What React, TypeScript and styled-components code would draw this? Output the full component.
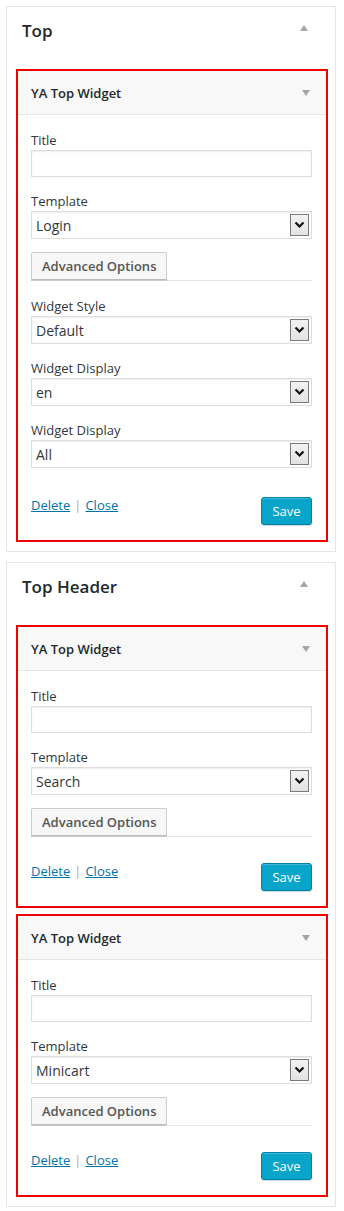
import React from "react";
import styled, { createGlobalStyle } from "styled-components";

const GlobalStyle = createGlobalStyle`
  body {
    margin: 0;
    background: #fff;
    font-family: "Open Sans", "Liberation Sans", sans-serif;
    color: #23282d;
  }
`;

const Page = styled.div`
  padding: 6px 8px 8px 6px;
  display: flex;
  flex-direction: column;
  gap: 10px;
`;

const Panel = styled.section`
  width: 330px;
  border: 1px solid #e5e5e5;
  padding: 0 7px 9px 9px;
  box-sizing: border-box;
`;

const PanelHeader = styled.div`
  height: 62px;
  box-sizing: border-box;
  display: flex;
  align-items: flex-start;
  justify-content: space-between;
  padding: 12px 20px 0 6px;
`;

const PanelTitle = styled.h2`
  margin: 0;
  font-size: 17px;
  line-height: 24px;
  font-weight: 600;
  color: #23282d;
`;

const Arrow = styled.span<{ $down?: boolean }>`
  width: 0;
  height: 0;
  border-left: 4px solid transparent;
  border-right: 4px solid transparent;
  ${(p) =>
    p.$down
      ? "border-top: 6px solid #a0a5aa;"
      : "border-bottom: 6px solid #a0a5aa; margin-top: 6px;"}
`;

const WidgetList = styled.div`
  display: flex;
  flex-direction: column;
  gap: 6px;
`;

const Widget = styled.div`
  border: 2px solid #f00000;
`;

const WidgetHeader = styled.div`
  height: 43px;
  background: #f8f8f8;
  border-bottom: 1px solid #e5e5e5;
  display: flex;
  align-items: center;
  justify-content: space-between;
  padding: 0 16px 0 13px;
`;

const WidgetTitle = styled.h3`
  margin: 0;
  font-size: 13px;
  font-weight: 600;
  color: #23282d;
`;

const WidgetBody = styled.div`
  padding: 16px 14px 15px 13px;
`;

const Field = styled.div`
  & + & {
    margin-top: 15px;
  }
`;

const Label = styled.label`
  display: block;
  font-size: 13px;
  line-height: 18px;
  color: #32373c;
  margin-bottom: 1px;
`;

const TextInput = styled.div`
  height: 27px;
  border: 1px solid #ddd;
  box-shadow: inset 0 1px 2px rgba(0, 0, 0, 0.07);
  box-sizing: border-box;
`;

const Select = styled.div`
  height: 28px;
  border: 1px solid #ddd;
  box-shadow: inset 0 1px 2px rgba(0, 0, 0, 0.07);
  box-sizing: border-box;
  display: flex;
  align-items: center;
  justify-content: space-between;
  padding: 0 2px 0 4px;
  font-size: 14px;
  color: #32373c;
`;

const DropButton = styled.span`
  width: 19px;
  height: 22px;
  box-sizing: border-box;
  border: 1px solid #7a7a7a;
  background: linear-gradient(#f2f2f2, #e3e3e3);
  display: flex;
  align-items: center;
  justify-content: center;
`;

const AdvancedRow = styled.div`
  margin-top: 13px;
  border-bottom: 1px solid #e5e5e5;
  & + ${Field} {
    margin-top: 16px;
  }
`;

const AdvancedButton = styled.button`
  height: 28px;
  padding: 0 10px;
  display: block;
  font-family: inherit;
  font-size: 13px;
  font-weight: 600;
  color: #555;
  background: #f7f7f7;
  border: 1px solid #ccc;
  border-bottom-color: #bbb;
  border-radius: 2px 2px 0 0;
  box-shadow: 0 1px 0 #ccc;
`;

const Footer = styled.div<{ $gap: number }>`
  margin-top: ${(p) => p.$gap}px;
  display: flex;
  justify-content: space-between;
  align-items: flex-start;
`;

const Links = styled.div`
  font-size: 13px;
  line-height: 18px;
  margin-top: -1px;
  display: flex;
  gap: 4px;
`;

const Link = styled.a`
  color: #0073aa;
  text-decoration: underline;
`;

const Sep = styled.span`
  color: #c9a67c;
`;

const SaveButton = styled.button`
  width: 51px;
  height: 28px;
  font-family: inherit;
  font-size: 13px;
  color: #fff;
  background: #08a5cb;
  border: 1px solid #0082a8;
  border-radius: 3px;
  box-shadow: inset 0 1px 0 rgba(120, 200, 230, 0.5), 0 1px 0 rgba(0, 0, 0, 0.15);
  padding: 0;
`;

const Chevron = () => (
  <svg width="11" height="8" viewBox="0 0 11 8">
    <path d="M1.5 1.5 L5.5 5.5 L9.5 1.5" fill="none" stroke="#111" strokeWidth="2.2" />
  </svg>
);

type SelectField = { label: string; value: string };

const WidgetBox = ({ template, extra, footerGap }: { template: string; extra?: SelectField[]; footerGap: number }) => (
  <Widget>
    <WidgetHeader>
      <WidgetTitle>YA Top Widget</WidgetTitle>
      <Arrow $down />
    </WidgetHeader>
    <WidgetBody>
      <Field>
        <Label>Title</Label>
        <TextInput />
      </Field>
      <Field>
        <Label>Template</Label>
        <Select>
          <span>{template}</span>
          <DropButton>
            <Chevron />
          </DropButton>
        </Select>
      </Field>
      <AdvancedRow>
        <AdvancedButton>Advanced Options</AdvancedButton>
      </AdvancedRow>
      {extra?.map((f, i) => (
        <Field key={i}>
          <Label>{f.label}</Label>
          <Select>
            <span>{f.value}</span>
            <DropButton>
              <Chevron />
            </DropButton>
          </Select>
        </Field>
      ))}
      <Footer $gap={footerGap}>
        <Links>
          <Link href="#">Delete</Link>
          <Sep>|</Sep>
          <Link href="#">Close</Link>
        </Links>
        <SaveButton>Save</SaveButton>
      </Footer>
    </WidgetBody>
  </Widget>
);

export default function App() {
  return (
    <Page>
      <GlobalStyle />
      <Panel>
        <PanelHeader>
          <PanelTitle>Top</PanelTitle>
          <Arrow />
        </PanelHeader>
        <WidgetList>
          <WidgetBox
            template="Login"
            footerGap={29}
            extra={[
              { label: "Widget Style", value: "Default" },
              { label: "Widget Display", value: "en" },
              { label: "Widget Display", value: "All" },
            ]}
          />
        </WidgetList>
      </Panel>
      <Panel>
        <PanelHeader>
          <PanelTitle>Top Header</PanelTitle>
          <Arrow />
        </PanelHeader>
        <WidgetList>
          <WidgetBox template="Search" footerGap={26} />
          <WidgetBox template="Minicart" footerGap={26} />
        </WidgetList>
      </Panel>
    </Page>
  );
}
